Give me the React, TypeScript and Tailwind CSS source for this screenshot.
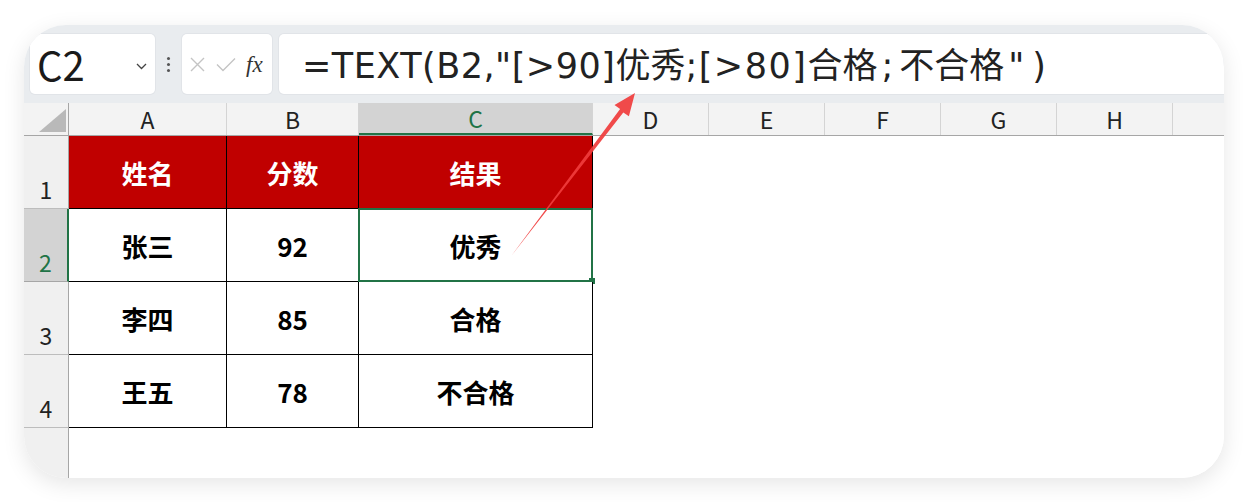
import React from 'react'

const COLS = ['A', 'B', 'C', 'D', 'E', 'F', 'G', 'H', '']
const COL_W = ['w-[158px]', 'w-[132px]', 'w-[234px]', 'w-[116px]', 'w-[116px]', 'w-[116px]', 'w-[116px]', 'w-[116px]', 'flex-1']

const ROWS = [
  { n: '1', cells: ['姓名', '分数', '结果'], head: true },
  { n: '2', cells: ['张三', '92', '优秀'] },
  { n: '3', cells: ['李四', '85', '合格'] },
  { n: '4', cells: ['王五', '78', '不合格'] },
]

// formula pieces: latin parts are set wider than the CJK ones, like the original UI font
const FORMULA: [string, string][] = [
  ['=TEXT(B2,"[>90]', 'latin'],
  ['优秀', 'cjk'],
  [';[>80]', 'latin2'],
  ['合格', 'cjk'],
  [';', 'semi'],
  ['不合格', 'cjk'],
  ['")', 'end'],
]

const LATIN_CLS: Record<string, string> = {
  latin: 'tracking-[0.5px]',
  latin2: 'tracking-[1.5px]',
  semi: 'pl-[4px] pr-[6px]',
  end: 'pl-[4px] tracking-[8px]',
}

const font = "font-['Noto_Sans_CJK_SC','Noto_Sans',sans-serif]"

function Toolbar() {
  return (
    <div className="flex h-[78px] items-center bg-[#e9ecef] pl-[6px]">
      <div className="flex h-[60px] w-[125px] items-center justify-between rounded-[5px] bg-white pl-[7px] pr-[8px] shadow-[0_0_0_1px_#e1e4e8]">
        <span className="text-[40px] leading-none text-[#1a1a1a]">C2</span>
        <svg width="11" height="7" viewBox="0 0 11 7" className="mt-[4px]">
          <path d="M1 1l4.5 4.5L10 1" fill="none" stroke="#444" strokeWidth="1.3" />
        </svg>
      </div>
      <div className="flex w-[27px] flex-col items-center gap-[3px]">
        <span className="h-[3px] w-[3px] rounded-full bg-[#555]" />
        <span className="h-[3px] w-[3px] rounded-full bg-[#555]" />
        <span className="h-[3px] w-[3px] rounded-full bg-[#555]" />
      </div>
      <div className="flex h-[60px] w-[90px] items-center gap-[10px] rounded-[5px] bg-white pl-[7px] shadow-[0_0_0_1px_#e1e4e8]">
        <svg width="17" height="17" viewBox="0 0 17 17">
          <path d="M2 2l13 13M15 2L2 15" stroke="#c4c4c4" strokeWidth="1.4" />
        </svg>
        <svg width="20" height="15" viewBox="0 0 20 15">
          <path d="M1 7.5l6 6L19 1.5" fill="none" stroke="#c4c4c4" strokeWidth="1.4" />
        </svg>
        <span className="font-['Liberation_Serif',serif] text-[23px] italic leading-none text-[#333]">fx</span>
      </div>
      <div className="ml-[7px] flex h-[60px] flex-1 items-center rounded-l-[5px] bg-white pl-[23px] shadow-[0_0_0_1px_#e1e4e8]">
        <span className="flex items-baseline whitespace-nowrap leading-none text-[#222]">
          {FORMULA.map(([t, kind], i) =>
            kind === 'cjk' ? (
              <span key={i} className="text-[35px]">{t}</span>
            ) : (
              <span key={i} className={`font-['DejaVu_Sans',sans-serif] text-[35px] ${LATIN_CLS[kind]}`}>
                {t}
              </span>
            )
          )}
        </span>
      </div>
    </div>
  )
}

function HeaderRow() {
  return (
    <div className="flex h-[33px] border-b border-[#a6a6a6] bg-[#f3f3f3]">
      <div className="relative w-[45px] border-r border-[#a6a6a6]">
        <svg width="27" height="23" viewBox="0 0 27 23" className="absolute bottom-[3px] right-[2px]">
          <polygon points="27,0 27,23 0,23" fill="#b9b9b9" />
        </svg>
      </div>
      {COLS.map((c, i) => (
        <div
          key={i}
          className={`${COL_W[i]} flex items-center justify-center text-[23px] leading-none ${
            c === 'C' ? 'border-b-2 border-b-[#217346] bg-[#d3d3d3] text-[#217346]' : 'text-[#222]'
          } ${i < COLS.length - 1 ? 'border-r border-r-[#d4d4d4]' : ''}`}
        >
          {c}
        </div>
      ))}
    </div>
  )
}

function DataRow({ n, cells, head }: { n: string; cells: string[]; head?: boolean }) {
  const sel = n === '2'
  return (
    <div className="flex h-[73px]">
      <div
        className={`flex w-[45px] items-end justify-center border-b border-r pb-[7px] text-[23px] leading-none ${
          sel ? 'border-r-2 border-b-[#a6a6a6] border-r-[#217346] bg-[#d3d3d3] text-[#217346]' : 'border-[#bdbdbd] border-r-[#a6a6a6] bg-[#f0f0f0] text-[#222]'
        }`}
      >
        {n}
      </div>
      {cells.map((t, i) => (
        <div
          key={i}
          className={`${COL_W[i]} relative flex items-center justify-center border-b border-r border-black text-[26px] font-bold ${
            head ? 'bg-[#c00000] text-white' : 'bg-white text-black'
          }`}
        >
          {t}
          {sel && i === 2 && (
            <div className="absolute -left-px -top-px bottom-[-1px] right-[-1px] border-2 border-[#217346]">
              <span className="absolute -bottom-[4px] -right-[4px] h-[6px] w-[6px] bg-[#217346]" />
            </div>
          )}
        </div>
      ))}
      <div className="flex-1 bg-white" />
    </div>
  )
}

export default function App() {
  return (
    <div className={`relative h-[502px] w-[1248px] overflow-hidden bg-white pl-[24px] pt-[25px] ${font}`}>
      <div className="flex h-[453px] w-[1200px] flex-col overflow-hidden rounded-[42px] bg-white shadow-[0_6px_22px_rgba(0,0,0,0.10)]">
        <Toolbar />
        <HeaderRow />
        {ROWS.map((r) => (
          <DataRow key={r.n} {...r} />
        ))}
        <div className="flex flex-1">
          <div className="w-[45px] border-r border-[#a6a6a6] bg-[#f0f0f0]" />
          <div className="flex-1 bg-white" />
        </div>
      </div>
      <svg width="1248" height="502" className="pointer-events-none absolute left-0 top-0">
        <polygon
          points="512,255 623.3,112.6 628.9,116.3 635,93 614.5,105.1 620.1,109.1"
          fill="#f03c3c"
          opacity="0.92"
        />
      </svg>
    </div>
  )
}
